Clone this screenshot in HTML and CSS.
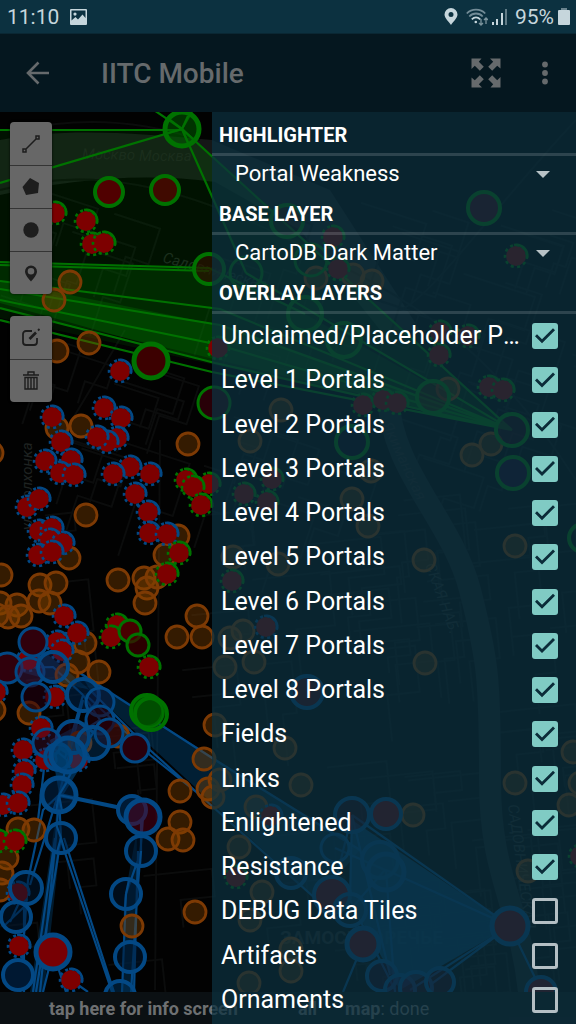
FILE: index.html
```html
<!DOCTYPE html>
<html lang="en">
<head>
<meta charset="utf-8">
<meta name="viewport" content="width=device-width, initial-scale=1">
<title>IITC Mobile</title>
<link rel="stylesheet" href="styles.css">
</head>
<body>
<div class="status">
  <span class="status-time">11:10</span>
  <svg class="status-picture" width="17" height="16" viewBox="0 0 17 16"><path fill="currentColor" fill-rule="evenodd" d="M1 0h15a1 1 0 0 1 1 1v14a1 1 0 0 1-1 1H1a1 1 0 0 1-1-1V1a1 1 0 0 1 1-1zm.5 1.500v10l4-3.500 2.500 2.500 4.500-5 3 3.500V1.500zM5 3.500a1.600 1.600 0 1 1 0 3.200 1.600 1.600 0 0 1 0-3.200z"/></svg>
  <div class="status-right">
    <svg width="14" height="17" viewBox="0 0 14 17"><path fill="currentColor" fill-rule="evenodd" d="M7 0a6.500 6.500 0 0 1 6.500 6.500C13.500 10 9 14 7 17 5 14 .5 10 .5 6.500A6.500 6.500 0 0 1 7 0zm0 4a2.500 2.500 0 1 0 0 5 2.500 2.500 0 0 0 0-5z"/></svg>
    <svg width="22" height="18" viewBox="0 0 22 18" fill="none" stroke="currentColor" stroke-width="1.800"><path opacity=".55" d="M.8 5.500C5.500.3 14.500.3 19.200 5.500M3.300 8.500c3.700-4 9.700-4 13.400 0"/><path d="M5.800 11.300c2.500-2.500 5.900-2.500 8.400 0"/><circle cx="9.800" cy="14" r="1.300" fill="currentColor" stroke="none"/><path opacity=".6" stroke-width="1.300" d="M15 11v6m-2-2 2 2 2-2M20 16v-6m-2 2 2-2 2 2"/></svg>
    <svg width="15" height="17" viewBox="0 0 15 17" fill="currentColor"><path d="M0 14h2v3H0zM4 11h2v6H4zM9 5h2v12H9z"/><path opacity=".45" d="M13 1h2v16h-2z"/></svg>
    <span>95%</span>
    <svg width="12" height="17" viewBox="0 0 12 17" fill="currentColor"><path opacity=".5" d="M3 0h6v2H3z"/><path d="M1 2h10a1 1 0 0 1 1 1v13a1 1 0 0 1-1 1H1a1 1 0 0 1-1-1V3a1 1 0 0 1 1-1z"/></svg>
  </div>
</div>
<header class="appbar">
  <button class="icon-button" aria-label="Back"><svg width="24" height="24" viewBox="0 0 24 24" fill="none" stroke="currentColor" stroke-width="2.600"><path d="M12.500 1.500 2 12l10.500 10.500M2 12h21"/></svg></button>
  <h1 class="appbar-title">IITC Mobile</h1>
  <button class="icon-button" aria-label="Full screen"><svg width="30" height="30" viewBox="0 0 30 30" fill="currentColor"><path id="arrow" d="M.5.500h10L7.800 3.800l5 5-4 4-5-5L.5 11z"/><use href="#arrow" transform="rotate(90 15 15)"/><use href="#arrow" transform="rotate(180 15 15)"/><use href="#arrow" transform="rotate(270 15 15)"/></svg></button>
  <button class="icon-button" aria-label="More options"><svg width="6" height="24" viewBox="0 0 6 24" fill="currentColor"><circle cx="3" cy="3.500" r="2.900"/><circle cx="3" cy="12" r="2.900"/><circle cx="3" cy="20.500" r="2.900"/></svg></button>
</header>
<main class="stage">
  <div class="view">
    <div class="map">
      <svg class="map-canvas" viewBox="0 112 576 880" preserveAspectRatio="xMinYMin slice" aria-hidden="true">
        <path class="water" d="M0 140C60 128 130 132 212 140L330 190 420 330 380 330 300 230 215 182C140 172 70 180 0 195z"/>
        <g id="streets" class="streets"></g>
        <path class="river" d="M388 395C390 470 452 520 470 590S490 680 490 780 520 900 530 1000"/>
        <g class="place">
          <text x="82" y="159" transform="rotate(1 82 159)">Москво</text><text x="139" y="161">Москва</text>
          <text x="162" y="262" transform="rotate(15 162 262)">Садовническая</text>
          <text x="32" y="530" transform="rotate(-90 32 530)">ул. Волхонка</text>
          <text x="382" y="425" transform="rotate(65 382 425)">Якиманская</text>
          <text x="425" y="565" transform="rotate(70 425 565)">СКАЯ НАБ.</text>
          <text x="508" y="805" transform="rotate(82 508 805)">САДОВНИЧЕСКАЯ</text>
          <text class="district" x="280" y="944">ЗАМОСКВОРЕЧЬЕ</text>
        </g>
        <g class="field-green">
          <path fill-opacity=".13" d="M0 130 182 129 512 430 0 318z"/>
          <path fill-opacity=".1" d="M182 129 246 273 512 430z"/>
          <path fill-opacity=".22" d="M0 262 209 269 305 314 512 430 0 308z"/>
          <path fill-opacity=".28" d="M0 281 220 325 512 430 215 363 0 303z"/>
        </g>
        <g class="field-blue">
          <path fill-opacity=".4" d="M80 673 360 850 317 900 90 690z"/>
          <path fill-opacity=".35" d="M59 795 30 992 44 992 61 838zM137 830 124 900 122 992 135 992z"/>
          <path fill-opacity=".4" d="M33 642 5 668 90 690z"/>
          <path fill-opacity=".75" d="M352 820 510 926 400 990 350 900z"/>
          <path fill-opacity=".6" d="M50 740 88 720 88 755 60 800z"/>
        </g>
        <path class="link green" d="M0 130H182M0 183 182 129 148 106M182 129 195 106M182 129 512 430M182 129 246 273M0 262 209 268 305 314M0 265 209 271M0 281 220 309 512 430M0 289 220 325 512 430M0 300 215 344 512 430M0 308 215 363 512 430M0 320 212 372 512 430M246 273 512 430"/>
        <path class="link blue" d="M80 673 220 763 360 850M90 690 150 750 213 807 317 900M86 695 150 755 200 795M59 795 43 810 28 880 20 992M58 795 30 885M61 838 36 992M56 838 40 992M55 838 33 992M60 838 112 992M64 838 114 992M59 795 83 700M45 760 38 820M59 795 100 720M59 795 61 838M59 795 56 838M141 817 141 851 126 894M143 817 137 900 131 992M138 851 134 992M126 894 122 992M26 888 10 922M5 925 26 905M24 900 24 992M53 952 43 992M53 952 66 992M71 980 88 992M33 642 5 668 53 667 83 695M83 695 65 758 47 743M83 695 100 720 73 737M352 815 510 926M386 870 510 926M352 815 350 900 395 990M386 870 395 992M352 815 390 975M510 926 430 985M510 926 410 990M510 926 541 990M363 944 343 992M352 815 332 895M335 848 385 870 350 910"/>
        <path class="link blue thick" d="M59 795 131 810"/>
        <g id="portals"></g>
      </svg>
      <div class="toolbars">
        <div class="toolbar">
          <button aria-label="Draw a polyline"><svg width="18" height="18" viewBox="0 0 18 18" fill="none" stroke="currentColor" stroke-width="1.500"><path d="M4 14 14 4M1 14h3v3H1zM14 1h3v3h-3z"/></svg></button>
          <button aria-label="Draw a polygon"><svg width="18" height="18" viewBox="0 0 18 18" fill="currentColor"><path d="m8 0 9 5-1 10L4 17 .5 9z"/></svg></button>
          <button aria-label="Draw a circle"><svg width="16" height="16" viewBox="0 0 16 16" fill="currentColor"><circle cx="8" cy="8" r="7.700"/></svg></button>
          <button aria-label="Draw a marker"><svg width="14" height="17" viewBox="0 0 14 17"><path fill="currentColor" fill-rule="evenodd" d="M7 .5a6 6 0 0 1 6 6C13 10 9 14 7 16.500 5 14 1 10 1 6.500a6 6 0 0 1 6-6zM7 3a3.300 3.300 0 1 0 0 6.600A3.300 3.300 0 0 0 7 3z"/></svg></button>
        </div>
        <div class="toolbar">
          <button aria-label="Edit layers"><svg width="20" height="20" viewBox="0 0 20 20" fill="none" stroke="currentColor" stroke-width="1.800"><path d="M11 3H5a3 3 0 0 0-3 3v8a3 3 0 0 0 3 3h8a3 3 0 0 0 3-3v-4"/><path stroke-width="2.600" d="m8.500 11 6.500-6.500"/><path d="m17 2.500 1.500-1.500"/></svg></button>
          <button aria-label="Delete layers"><svg width="16" height="21" viewBox="0 0 16 21" fill="none" stroke="currentColor" stroke-width="1.400"><path d="M0 4h16M5 4V1h6v3M2 6.500h12v11.500H2zM5 7v11M8 7v11M11 7v11"/></svg></button>
        </div>
      </div>
    </div>
    <footer class="info"><a class="info-link" href="#info">tap here for info screen</a><b class="info-all">all</b><span class="info-map"><b>map</b>: done</span></footer>
  </div>
  <aside class="panel">
    <h2 class="panel-title"><label for="highlighter">HIGHLIGHTER</label></h2>
    <div class="spinner"><select id="highlighter"><option>Portal Weakness</option></select></div>
    <h2 class="panel-title"><label for="base">BASE LAYER</label></h2>
    <div class="spinner"><select id="base"><option>CartoDB Dark Matter</option></select></div>
    <h2 class="panel-title">OVERLAY LAYERS</h2>
    <div class="layers">
      <label class="layer"><span>Unclaimed/Placeholder Portals</span><input type="checkbox" checked></label>
      <label class="layer"><span>Level 1 Portals</span><input type="checkbox" checked></label>
      <label class="layer"><span>Level 2 Portals</span><input type="checkbox" checked></label>
      <label class="layer"><span>Level 3 Portals</span><input type="checkbox" checked></label>
      <label class="layer"><span>Level 4 Portals</span><input type="checkbox" checked></label>
      <label class="layer"><span>Level 5 Portals</span><input type="checkbox" checked></label>
      <label class="layer"><span>Level 6 Portals</span><input type="checkbox" checked></label>
      <label class="layer"><span>Level 7 Portals</span><input type="checkbox" checked></label>
      <label class="layer"><span>Level 8 Portals</span><input type="checkbox" checked></label>
      <label class="layer"><span>Fields</span><input type="checkbox" checked></label>
      <label class="layer"><span>Links</span><input type="checkbox" checked></label>
      <label class="layer"><span>Enlightened</span><input type="checkbox" checked></label>
      <label class="layer"><span>Resistance</span><input type="checkbox" checked></label>
      <label class="layer"><span>DEBUG Data Tiles</span><input type="checkbox"></label>
      <label class="layer"><span>Artifacts</span><input type="checkbox"></label>
      <label class="layer"><span>Ornaments</span><input type="checkbox"></label>
    </div>
  </aside>
</main>
<script src="map.js"></script>
</body>
</html>
```

FILE: styles.css
```css
* { box-sizing: border-box; }
body {
  margin: 0;
  min-height: 100vh;
  display: flex;
  flex-direction: column;
  background: #000;
  color: #fff;
  font-family: Roboto, "Noto Sans", sans-serif;
}
button { border: 0; padding: 0; background: none; color: inherit; font: inherit; }
svg { display: block; }

.status {
  display: flex;
  align-items: center;
  height: 34px;
  padding: 0 6px 0 7px;
  gap: 11px;
  background: #0c3140;
  border-bottom: 1px solid #0a2733;
  color: #c6d6dc;
  font-size: 21px;
}
.status-right { display: flex; align-items: center; gap: 8px; margin-left: auto; }
.status-right svg:nth-child(3) { margin-left: -4px; }
.status-right svg:last-child { margin-left: -4px; }

.appbar {
  display: flex;
  align-items: center;
  height: 78px;
  padding: 0 28px 0 26px;
  background: #05171f;
  color: #666a6c;
}
.appbar-title { flex: 1; margin: 0 0 0 51px; font-size: 28px; font-weight: 500; }
.appbar .icon-button:last-child { margin-left: 41px; }

.stage { flex: 1; display: grid; }
.view { grid-area: 1 / 1; display: flex; flex-direction: column; }
.map { flex: 1; position: relative; background: #020202; overflow: hidden; }
.map-canvas { position: absolute; inset: 0; width: 100%; height: 100%; }
.toolbars { position: relative; display: flex; flex-direction: column; align-items: flex-start; gap: 22px; padding: 10px; }
.toolbar { width: 42px; border-radius: 4px; overflow: hidden; background: #676767; box-shadow: 0 0 2px 1px #0006; }
.toolbar button { display: flex; align-items: center; justify-content: center; width: 100%; height: 43px; color: #1d1d1d; }
.toolbar button + button { border-top: 1px solid #343434; }

.water { fill: #151717; }
.streets { fill: none; stroke: #0b0c0c; stroke-width: 2; }
.river { fill: none; stroke: #121719; stroke-width: 22; }
.place { fill: #1f2221; font-size: 15px; font-style: italic; }
.district { font-size: 19px; font-style: normal; font-weight: 700; }
.field-green { fill: #008000; }
.field-blue { fill: #004a80; }
.link { fill: none; stroke-width: 2.2; }
.thick { stroke-width: 4; }
.green { stroke: #007200; }
.blue { stroke: #034884; }
.neutral { fill: #80400066; stroke: #7d3a04; stroke-width: 2.8; }
.weak { fill: #7d0000; }
.dots { fill: none; stroke-width: 2.6; stroke-dasharray: 3 3.500; }
.arc { fill: none; stroke-width: 2.6; }

.info {
  display: flex;
  align-items: center;
  height: 32px;
  padding: 0 49px;
  background: #0b1013;
  color: #6e7072;
  font-size: 18px;
  white-space: nowrap;
}
.info-link { color: inherit; font-weight: 700; text-decoration: none; }
.info-all { margin-left: 60px; }
.info-map { margin-left: 28px; }

.panel {
  grid-area: 1 / 1;
  justify-self: end;
  position: relative;
  display: flex;
  flex-direction: column;
  width: 63.2%;
  min-width: 0;
  padding: 1px 0 2px;
  background: rgba(12, 49, 64, .74);
}
.panel-title {
  height: 43px;
  margin: 0;
  padding-left: 7px;
  border-bottom: 3px solid #ffffff26;
  font-size: 20px;
  font-weight: 700;
  line-height: 44px;
}
.spinner { position: relative; height: 36px; }
.spinner::after {
  content: "";
  position: absolute;
  right: 26px;
  top: 15px;
  width: 14px;
  height: 7px;
  background: #b8c3c7;
  clip-path: polygon(0 0, 100% 0, 50% 100%);
  pointer-events: none;
}
.spinner select {
  appearance: none;
  width: 100%;
  height: 36px;
  padding: 0 60px 0 23px;
  border: 0;
  background: none;
  color: #fff;
  font: 400 22px/36px Roboto, sans-serif;
}
.layers { flex: 1; display: flex; flex-direction: column; }
.layer {
  flex: 1 0 auto;
  display: flex;
  align-items: center;
  gap: 10px;
  min-height: 44px;
  padding: 0 18px 0 9px;
  font-size: 25px;
  line-height: 32px;
}
.layer span { flex: 1; min-width: 0; overflow: hidden; text-overflow: ellipsis; white-space: nowrap; }
.layer input {
  appearance: none;
  flex: none;
  width: 26px;
  height: 26px;
  margin: 0;
  border: 3px solid #b4bfc4;
  border-radius: 3px;
}
.layer input:checked { border: 0; background: #80cbc4; }
.layer input:checked::before {
  content: "";
  display: block;
  width: 26px;
  height: 26px;
  background: #0b2c39;
  clip-path: polygon(3px 13px, 5px 11px, 10px 16px, 21px 5px, 23px 7px, 10px 20px);
}
```

FILE: map.js
```js
const NS = "http://www.w3.org/2000/svg";
const layer = document.getElementById("portals");
const streets = document.getElementById("streets");

function add(parent, tag, attrs) {
  const el = document.createElementNS(NS, tag);
  for (const key in attrs) el.setAttribute(key, attrs[key]);
  parent.appendChild(el);
}

// Faint street grid
let seed = 7;
const rnd = () => (seed = (seed * 16807) % 2147483647) / 2147483647;
for (let i = 0; i < 150; i++) {
  const x = rnd() * 576, y = 190 + rnd() * 800, w = 20 + rnd() * 60, h = 15 + rnd() * 40;
  const a = y < 500 ? 18 : -6;
  add(streets, "path", { d: `M${x} ${y}h${w}v${h}h${-w / 2}v${h}`, transform: `rotate(${a} ${x} ${y})` });
}
add(streets, "path", { d: "M0 190C90 165 180 185 290 240S480 330 576 480M576 120C500 200 430 300 400 310M20 130Q110 110 200 140M160 440 155 990M125 330 90 390 60 440" });

const neutral = [[70,282],[54,300],[57,351],[89,343],[81,426],[57,428],[188,444],[86,515],[-8,453],[69,558],[1,575],[40,585],[56,583],[39,601],[50,603],[17,605],[0,603],[8,617],[21,616],[-3,615],[118,580],[144,578],[147,588],[145,603],[157,577],[165,555],[178,536],[197,616],[177,637],[202,637],[85,643],[78,662],[99,672],[67,675],[29,713],[-6,710],[215,725],[118,736],[204,759],[180,791],[180,822],[168,839],[183,840],[195,912],[132,926],[208,789],[213,797],[220,780],[18,829],[34,830],[7,858],[2,873],[0,890],[80,743],[353,275],[372,281],[316,278],[281,410],[250,441],[448,389],[491,444],[472,455],[371,471],[352,499],[368,526],[515,546],[278,564],[233,557],[424,560],[243,631],[230,638],[225,667],[254,662],[425,663],[285,748],[573,752],[301,785],[515,783],[580,783],[256,807],[413,815],[569,805],[239,847],[262,892],[250,920],[291,949],[291,971],[249,983],[528,871]];
const weakBlue = [[120,371],[104,408],[121,418],[52,417],[61,442],[45,461],[71,460],[60,473],[74,475],[117,438],[107,442],[97,437],[150,474],[130,467],[113,474],[135,494],[148,512],[27,507],[39,499],[39,531],[52,528],[149,533],[167,534],[50,540],[63,543],[38,555],[52,552],[64,616],[77,633],[57,642],[62,651],[55,697],[-4,692],[41,728],[28,660],[23,750],[24,771],[22,785],[3,805],[18,803],[19,946],[71,980],[78,760],[45,760],[18,893],[266,627],[271,816]];
const weakGreen = [[55,213],[86,221],[92,244],[104,243],[186,480],[209,484],[193,487],[201,505],[218,348],[179,553],[167,574],[117,625],[111,637],[149,667],[-2,841],[15,841],[333,237],[338,269],[516,256],[440,332],[439,355],[468,336],[363,405],[383,400],[397,403],[489,387],[503,390],[244,494],[267,502],[272,479],[232,581],[236,877],[580,856]];
// x, y, radius, stroke width, fill
const bigGreen = [[182,129,17,5,"#00600088"],[109,192,14,4,"#500000"],[165,190,14,4,"#400a00"],[209,269,15,4,"#2c1200aa"],[151,361,17,5,"#3c0000"],[214,403,16,3,"#280008"],[130,631,11,3,"#480000"],[138,645,11,3,"#400000aa"],[147,711,16,4,"#004c00"],[151,714,16,4,"#00500066"],[149,713,14,2,"none"],[484,208,16,4,"#400010"],[287,221,16,4,"#30100066"],[311,260,16,3,"none"],[246,273,16,3,"none"],[305,314,17,4,"#00600044"],[344,340,17,4,"#00600044"],[433,397,16,4,"#40100088"],[512,430,16,4,"#30001088"],[513,473,16,4,"#180020"],[352,442,16,4,"#0a0010"],[583,538,14,4,"none"]];
const bigBlue = [[33,642,14,3,"#30000c"],[7,668,15,3,"#30000c"],[30,672,14,3,"#40184088"],[36,697,14,3,"#28001088"],[53,667,15,4,"#20205066"],[83,695,16,4,"#00285088"],[100,702,14,3,"#10184066"],[100,720,14,3,"#28000c88"],[109,733,14,3,"#28000caa"],[73,737,16,4,"#24001088"],[93,743,16,4,"#003b7066"],[47,743,14,3,"#40103066"],[58,757,13,4,"#00407088"],[68,755,17,5,"#00407088"],[135,748,14,3,"#28000c"],[59,795,17,5,"#00285088"],[61,838,15,4,"#00183288"],[132,810,14,4,"#001a34"],[143,817,17,5,"#50001888"],[141,851,15,4,"#00183288"],[126,894,15,4,"#00183288"],[26,888,16,4,"#00183288"],[16,917,15,4,"#00183288"],[53,952,17,5,"#780004"],[18,975,15,4,"#001832"],[130,957,15,4,"#00183288"],[120,996,15,4,"#00305888"],[352,815,17,4,"#38001888"],[386,814,15,4,"#600008"],[291,873,15,4,"#00204088"],[332,895,18,4,"#58000c"],[363,944,16,5,"#58000c"],[510,926,18,5,"#58000c"],[541,992,15,4,"#58000c"],[307,692,16,4,"#40000c"],[380,860,18,4,"#00407066"],[386,872,18,5,"#00407066"],[335,848,14,3,"#00204066"],[350,910,16,4,"#00305866"],[382,976,15,4,"#30003066"],[400,990,15,4,"#30003066"],[416,988,16,4,"#40002066"],[440,982,14,4,"#40002066"]];

for (const [cx, cy] of neutral) add(layer, "circle", { cx, cy, r: 11, class: "neutral" });
function weak(list, color) {
  for (const [cx, cy] of list) {
    add(layer, "circle", { cx, cy, r: 10, class: "weak" });
    add(layer, "circle", { cx, cy, r: 11, class: "dots " + color });
    add(layer, "path", { d: `M${cx - 2} ${cy - 11}A11 11 0 0 1 ${cx + 11} ${cy + 2}`, class: "arc " + color });
  }
}
weak(weakBlue, "blue");
weak(weakGreen, "green");
function rings(list, color) {
  for (const [cx, cy, r, w, fill] of list) add(layer, "circle", { cx, cy, r, fill, "stroke-width": w, class: color });
}
rings(bigBlue, "blue");
rings(bigGreen, "green");
add(layer, "path", { class: "link green", d: "M182 129l-12-9M182 129l6-13M182 129l-14 4M182 129l6 14M182 129l12 11" });
add(layer, "path", { class: "link blue", d: "M59 795l-3 16M59 795l3 16M59 795l14 3M59 795l8-13M61 838l-5-14M61 838l-4 14M61 838l4 14M141 851l-1 14M126 894l3-14M126 894l-1 14" });
```
